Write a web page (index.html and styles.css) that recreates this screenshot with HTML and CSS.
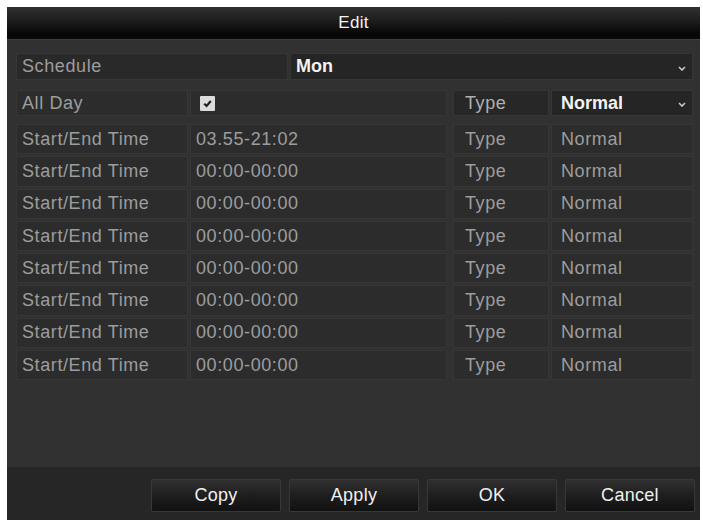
FILE: index.html
```html
<!DOCTYPE html>
<html>
<head>
<meta charset="utf-8">
<link rel="stylesheet" href="styles.css">
</head>
<body>
<div class="dialog">
  <div class="title">Edit</div>
  <div class="content">
    <div class="row sched">
      <div class="cell label">Schedule</div>
      <div class="cell select strong">Mon<svg class="chev" viewBox="0 0 8 5"><polyline points="1,1 4,4 7,1"/></svg></div>
    </div>
    <div class="row pair allday">
      <div class="group">
        <div class="cell label c1">All Day</div>
        <div class="cell value"><span class="check"><svg viewBox="0 0 10 10"><polyline points="2,5.2 4.2,7.2 8,2.8"/></svg></span></div>
      </div>
      <div class="group">
        <div class="cell label c3 type1">Type</div>
        <div class="cell select strong">Normal<svg class="chev" viewBox="0 0 8 5"><polyline points="1,1 4,4 7,1"/></svg></div>
      </div>
    </div>
    <div class="times">
      <div class="row pair"><div class="group"><div class="cell label c1">Start/End Time</div><div class="cell value">03.55-21:02</div></div><div class="group"><div class="cell label c3">Type</div><div class="cell value">Normal</div></div></div>
      <div class="row pair"><div class="group"><div class="cell label c1">Start/End Time</div><div class="cell value">00:00-00:00</div></div><div class="group"><div class="cell label c3">Type</div><div class="cell value">Normal</div></div></div>
      <div class="row pair"><div class="group"><div class="cell label c1">Start/End Time</div><div class="cell value">00:00-00:00</div></div><div class="group"><div class="cell label c3">Type</div><div class="cell value">Normal</div></div></div>
      <div class="row pair"><div class="group"><div class="cell label c1">Start/End Time</div><div class="cell value">00:00-00:00</div></div><div class="group"><div class="cell label c3">Type</div><div class="cell value">Normal</div></div></div>
      <div class="row pair"><div class="group"><div class="cell label c1">Start/End Time</div><div class="cell value">00:00-00:00</div></div><div class="group"><div class="cell label c3">Type</div><div class="cell value">Normal</div></div></div>
      <div class="row pair"><div class="group"><div class="cell label c1">Start/End Time</div><div class="cell value">00:00-00:00</div></div><div class="group"><div class="cell label c3">Type</div><div class="cell value">Normal</div></div></div>
      <div class="row pair"><div class="group"><div class="cell label c1">Start/End Time</div><div class="cell value">00:00-00:00</div></div><div class="group"><div class="cell label c3">Type</div><div class="cell value">Normal</div></div></div>
      <div class="row pair"><div class="group"><div class="cell label c1">Start/End Time</div><div class="cell value">00:00-00:00</div></div><div class="group"><div class="cell label c3">Type</div><div class="cell value">Normal</div></div></div>
    </div>
  </div>
  <div class="footer">
    <button class="btn">Copy</button>
    <button class="btn">Apply</button>
    <button class="btn">OK</button>
    <button class="btn">Cancel</button>
  </div>
</div>
</body>
</html>
```
FILE: styles.css
```css
html, body {
  margin: 0;
  padding: 0;
  background: #ffffff;
}
body {
  font-family: "Liberation Sans", Arial, sans-serif;
  font-size: 18px;
  letter-spacing: 0.6px;
}
.dialog {
  margin: 7px 0 0 7px;
  width: 693px;
  height: 513px;
  background: #313131;
  display: flex;
  flex-direction: column;
  overflow: hidden;
}
.title {
  height: 32px;
  flex: none;
  display: flex;
  align-items: center;
  justify-content: center;
  color: #f2f2f2;
  font-size: 17px;
  letter-spacing: 0.3px;
  background: linear-gradient(#303030 0%, #1c1c1c 45%, #060606 85%, #0a0a0a 100%);
  border-bottom: 1px solid #3d3d3d;
}
.content {
  flex: 1;
  padding: 13px 7px 0 9px;
  display: flex;
  flex-direction: column;
}
.row {
  display: flex;
  gap: 2px;
}
.sched {
  height: 27px;
}
.sched .label {
  width: 272px;
  flex: none;
  background: #292929;
}
.allday {
  margin-top: 10px;
  height: 26px;
}
.pair {
  gap: 6px;
}
.group {
  display: flex;
  gap: 2px;
}
.group:first-child {
  width: 431px;
}
.group:last-child {
  flex: 1;
}
.cell {
  display: flex;
  align-items: center;
  padding-left: 6px;
  background: #2c2c2c;
  box-shadow: inset 0 0 0 1px #363636;
  color: #9d9d9d;
  white-space: nowrap;
  box-sizing: border-box;
}
.c1 {
  width: 172px;
  flex: none;
}
.c3 {
  width: 96px;
  flex: none;
  padding-left: 12px;
}
.value {
  flex: 1;
}
.group:last-child .value {
  padding-left: 10px;
}
.select {
  flex: 1;
  background: #252525;
  position: relative;
  padding-left: 6px;
}
.group .select {
  padding-left: 10px;
}
.strong {
  color: #f2f2f2;
  font-weight: bold;
  letter-spacing: 0;
}
.type1 {
  color: #b0b0b0;
  background: #272727;
}
.chev {
  position: absolute;
  right: 7px;
  top: 50%;
  width: 8px;
  height: 5px;
  margin-top: -1px;
  fill: none;
  stroke: #c8c8c8;
  stroke-width: 1.6;
}
.check {
  width: 15px;
  height: 15px;
  margin-left: 4px;
  background: #dcdcdc;
  border-radius: 1px;
  display: flex;
  align-items: center;
  justify-content: center;
}
.check svg {
  width: 11px;
  height: 11px;
  fill: none;
  stroke: #222;
  stroke-width: 2;
}
.times {
  margin-top: 8px;
  display: flex;
  flex-direction: column;
  gap: 2px;
}
.times .row {
  height: 30.3px;
}
.footer {
  height: 53px;
  flex: none;
  background: #262626;
  box-sizing: border-box;
  padding: 12px 5px 0 0;
  display: flex;
  justify-content: flex-end;
  align-items: flex-start;
  gap: 8px;
}
.btn {
  width: 130px;
  height: 33px;
  border: 1px solid #383838;
  border-radius: 2px;
  background: linear-gradient(#303030 0%, #1e1e1e 50%, #111111 100%);
  color: #f0f0f0;
  font-family: "Liberation Sans", Arial, sans-serif;
  font-size: 18px;
  letter-spacing: 0.3px;
  padding: 0;
}
```
